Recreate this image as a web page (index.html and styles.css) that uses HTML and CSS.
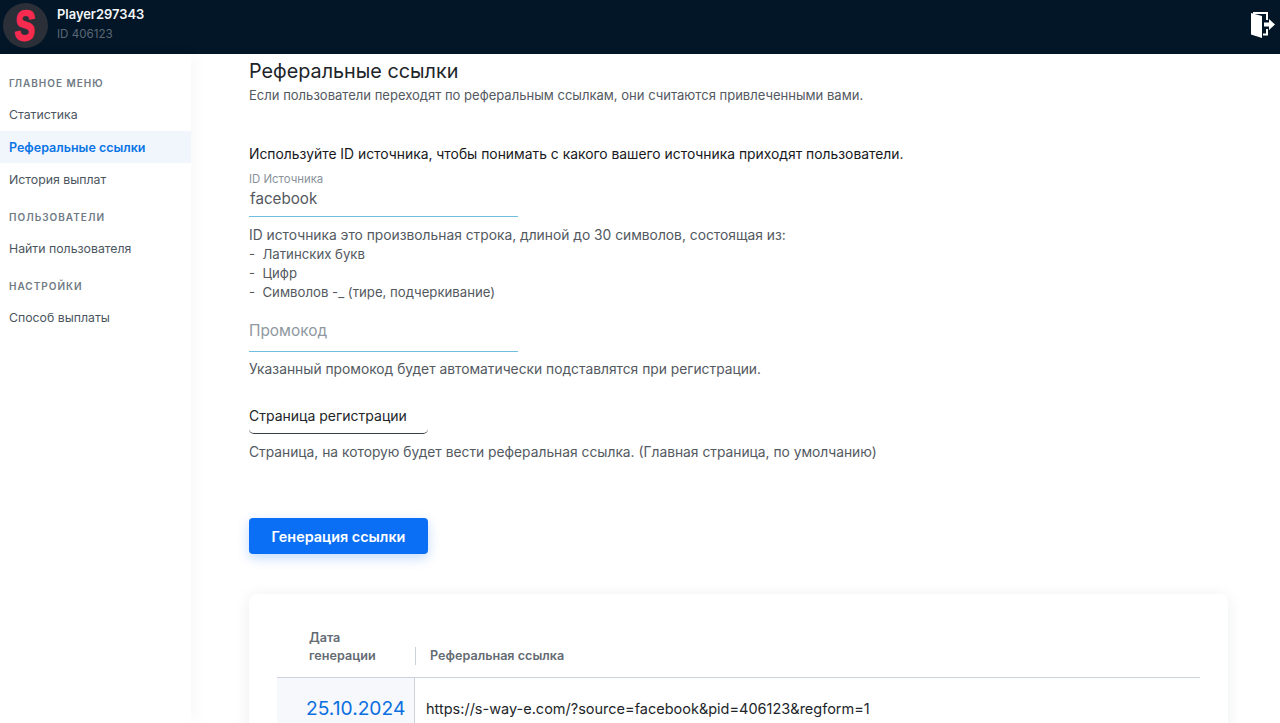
FILE: index.html
```html
<!DOCTYPE html>
<html lang="ru">
  <head>
    <meta charset="utf-8">
    <title>Реферальные ссылки</title>
    <link rel="stylesheet" href="styles.css">
  </head>
  <body>
    <header class="topbar">
      <div class="user">
        <div class="avatar"><span class="avatar-s">S</span></div>
        <div class="user-info">
          <div class="user-name">Player297343</div>
          <div class="user-id">ID 406123</div>
        </div>
      </div>
      <svg class="logout" width="26" height="28" viewBox="0 0 26 28">
        <path d="M1 2 L12 5 V27 L1 23.5 Z" fill="#fff"/>
        <path d="M3 2 H17 V9 M17 18 V23.5 H13" fill="none" stroke="#fff" stroke-width="2"/>
        <path d="M14 11.5 H19 V8 L25 13.5 L19 19 V15.5 H14 Z" fill="#fff"/>
      </svg>
    </header>

    <div class="layout">
      <nav class="sidebar">
        <div class="nav-title">Главное меню</div>
        <a class="nav-item">Статистика</a>
        <a class="nav-item active">Реферальные ссылки</a>
        <a class="nav-item">История выплат</a>
        <div class="nav-title">Пользователи</div>
        <a class="nav-item">Найти пользователя</a>
        <div class="nav-title">Настройки</div>
        <a class="nav-item">Способ выплаты</a>
      </nav>

      <main class="content">
        <h1>Реферальные ссылки</h1>
        <p class="subtitle">Если пользователи переходят по реферальным ссылкам, они считаются привлеченными вами.</p>

        <p class="lead">Используйте ID источника, чтобы понимать с какого вашего источника приходят пользователи.</p>

        <div class="field">
          <label>ID Источника</label>
          <div class="field-value">facebook</div>
        </div>
        <div class="hint hint-list">
          <div>ID источника это произвольная строка, длиной до 30 символов, состоящая из:</div>
          <div class="hint-item">-&nbsp; Латинских букв</div>
          <div class="hint-item">-&nbsp; Цифр</div>
          <div class="hint-item">-&nbsp; Символов -_ (тире, подчеркивание)</div>
        </div>

        <div class="field field-promo">
          <div class="field-value placeholder">Промокод</div>
        </div>
        <div class="hint">Указанный промокод будет автоматически подставлятся при регистрации.</div>

        <div class="select">Страница регистрации</div>
        <div class="hint">Страница, на которую будет вести реферальная ссылка. (Главная страница, по умолчанию)</div>

        <button class="btn">Генерация ссылки</button>

        <section class="card">
          <div class="table-head">
            <div class="col-date">Дата<br>генерации</div>
            <div class="col-link">Реферальная ссылка</div>
          </div>
          <div class="table-row">
            <div class="cell-date">25.10.2024</div>
            <div class="cell-link">https://s-way-e.com/?source=facebook&amp;pid=406123&amp;regform=1</div>
          </div>
        </section>
      </main>
    </div>
  </body>
</html>
```

FILE: styles.css
```css
* {
  box-sizing: border-box;
}

html, body {
  height: 723px;
  overflow: hidden;
}

body {
  margin: 0;
  background-color: #fff;
  font-family: Inter, "Noto Sans", sans-serif;
  color: #212529;
}

.topbar {
  display: flex;
  justify-content: space-between;
  align-items: flex-start;
  height: 54px;
  padding: 3px 4px 0 3px;
  background-color: #021627;
}

.user {
  display: flex;
}

.avatar {
  display: flex;
  justify-content: center;
  align-items: center;
  width: 45px;
  height: 45px;
  border-radius: 50%;
  background-color: #2b2f38;
}

.avatar-s {
  font-family: "Liberation Sans", sans-serif;
  font-size: 42px;
  font-weight: 700;
  color: #f72a50;
  -webkit-text-stroke: 2px #f72a50;
  transform: scaleX(0.72) skewX(-5deg);
}

.user-info {
  margin: 4px 0 0 9px;
}

.user-name {
  font-size: 12.9px;
  font-weight: 600;
  line-height: 16px;
  color: #f4f6f8;
}

.user-id {
  margin-top: 3px;
  font-size: 11.6px;
  line-height: 16px;
  color: #5d6875;
}

.logout {
  margin-top: 8px;
}

.layout {
  display: flex;
  height: 669px;
}

.sidebar {
  flex: none;
  width: 191px;
  padding-top: 7.5px;
  box-shadow: 3px 0 16px rgba(20, 40, 60, 0.035);
}

.nav-title {
  height: 34px;
  margin-top: 3.5px;
  padding: 11px 9px 0;
  font-size: 10px;
  font-weight: 600;
  line-height: 14px;
  letter-spacing: 1px;
  text-transform: uppercase;
  color: #6f7a84;
}

.nav-item {
  display: block;
  height: 32px;
  padding: 0 9px;
  font-size: 12.3px;
  line-height: 32px;
  color: #4b5560;
}

.nav-item.active {
  font-size: 12.5px;
  font-weight: 600;
  line-height: 33px;
  color: #0a74e6;
  background-color: #f1f6fc;
}

.nav-item.active + .nav-item {
  line-height: 33px;
}

.content {
  flex: 1;
  padding: 5px 52px 0 58px;
}

h1 {
  margin: 0;
  font-size: 19.8px;
  font-weight: 400;
  line-height: 24px;
  color: #212529;
}

.subtitle {
  margin: 2px 0 0;
  font-size: 13.04px;
  line-height: 20px;
  color: #53595f;
}

.lead {
  margin: 39px 0 0;
  font-size: 13.86px;
  line-height: 20px;
  color: #17191c;
}

.field {
  width: 269px;
  border-bottom: 1px solid #6fc0e0;
}

.field label {
  display: block;
  margin-top: 8px;
  font-size: 11.4px;
  line-height: 14px;
  color: #8a939c;
}

.field-value {
  height: 30px;
  padding: 1px 0 0 1px;
  font-size: 15.2px;
  line-height: 24px;
  color: #53595f;
}

.placeholder {
  height: 32px;
  padding: 0;
  font-size: 15.4px;
  color: #8f98a1;
}

.field-promo {
  margin-top: 17px;
}

.hint {
  font-size: 13.8px;
  line-height: 20px;
  color: #53595f;
}

.hint-list {
  margin-top: 9px;
  line-height: 19px;
}

.hint-item {
  font-size: 13.2px;
}

.field-promo + .hint {
  margin-top: 7px;
}

.select {
  width: 179px;
  height: 32px;
  margin-top: 23px;
  border-bottom: 1px solid #3a3f45;
  border-radius: 0 0 5px 5px;
  font-size: 14px;
  line-height: 27px;
  color: #212529;
}

.select + .hint {
  margin-top: 8px;
}

.btn {
  display: block;
  width: 179px;
  height: 36px;
  margin-top: 56px;
  border: 0;
  border-radius: 4px;
  background-color: #0a6ff5;
  box-shadow: 0 4px 12px rgba(10, 111, 245, 0.25);
  font-family: Inter, sans-serif;
  font-size: 14.4px;
  font-weight: 600;
  color: #fff;
}

.card {
  height: 200px;
  margin-top: 40px;
  padding: 29px 28px 0;
  border-radius: 8px;
  box-shadow: 0 2px 16px rgba(20, 40, 60, 0.08);
}

.table-head {
  display: flex;
  align-items: flex-end;
  height: 55px;
  padding-bottom: 12px;
  border-bottom: 1px solid #ccd3dc;
  font-size: 12.6px;
  font-weight: 600;
  line-height: 18px;
  color: #646b73;
}

.col-date {
  position: relative;
  width: 139px;
  padding-left: 32px;
}

.col-date::after {
  content: "";
  position: absolute;
  right: 0;
  bottom: 0;
  height: 18px;
  border-right: 1px solid #ccd3dc;
}

.col-link {
  padding-left: 14px;
}

.table-row {
  display: flex;
  height: 60px;
}

.cell-date {
  flex: none;
  width: 138px;
  padding: 18px 0 0 29px;
  border-right: 1px solid #ccd3dc;
  background-color: #f6f8fb;
  font-size: 19.2px;
  line-height: 24px;
  color: #0a6fe0;
}

.cell-link {
  padding: 20px 0 0 11px;
  font-size: 14.5px;
  line-height: 22px;
  color: #212529;
}
```
